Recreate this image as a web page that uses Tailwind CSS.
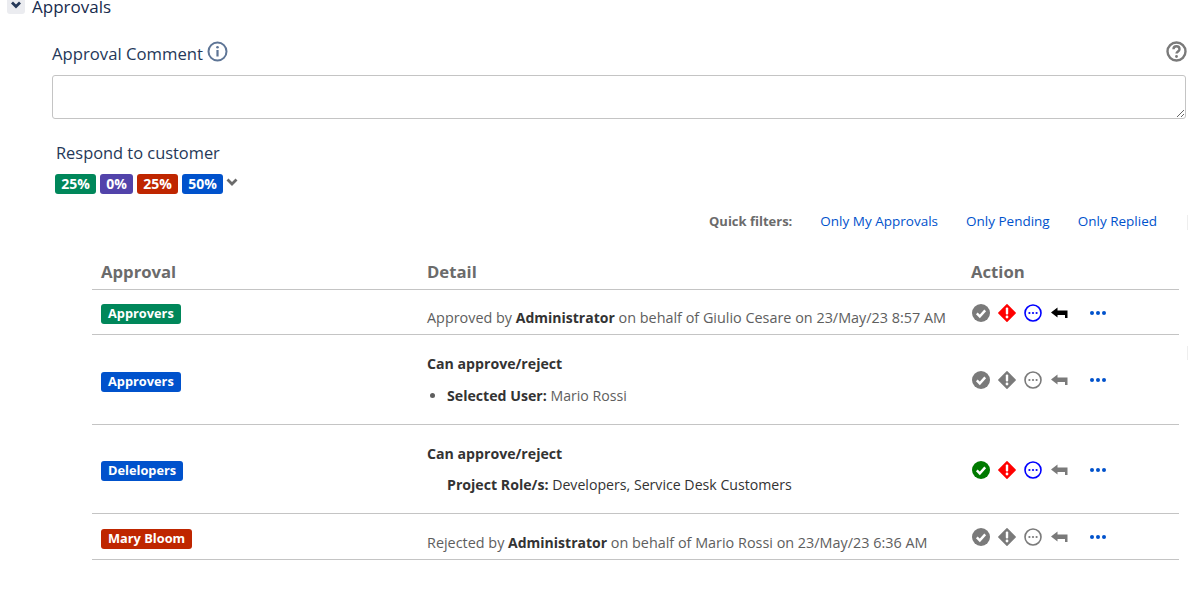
<!DOCTYPE html>
<html lang="en">
<head>
<meta charset="UTF-8">
<title>Approvals</title>
<script src="https://cdn.jsdelivr.net/npm/@tailwindcss/browser@4"></script>
</head>
<body class="relative bg-white h-[592px] overflow-hidden font-['Open_Sans',sans-serif] text-[14px] text-[#42526e]">
<svg class="hidden">
  <symbol id="check" viewBox="0 0 18 18"><circle cx="9" cy="9" r="9" fill="currentColor"/><path d="M4.8 9.4l3 3 5.4-6" fill="none" stroke="#fff" stroke-width="2.4"/></symbol>
  <symbol id="warn" viewBox="0 0 18 18"><path d="M9 0.8l8.2 8.2-8.2 8.2-8.2-8.2z" fill="currentColor" stroke="currentColor" stroke-width="1.4" stroke-linejoin="round"/><rect x="7.8" y="3.600" width="2.4" height="7" rx="1" fill="#fff"/><circle cx="9" cy="13" r="1.400" fill="#fff"/></symbol>
  <symbol id="more" viewBox="0 0 18 18"><circle cx="9" cy="9" r="8" fill="none" stroke="currentColor" stroke-width="1.600"/><circle cx="5.400" cy="9" r="1.100" fill="currentColor"/><circle cx="9" cy="9" r="1.100" fill="currentColor"/><circle cx="12.600" cy="9" r="1.100" fill="currentColor"/></symbol>
  <symbol id="reply" viewBox="0 0 17 12"><path d="M0 5.500L6.500 0.500V3.500H16.500V11H14V8H6.500V10.500z" fill="currentColor"/></symbol>
  <symbol id="dots" viewBox="0 0 18 6"><circle cx="3" cy="3" r="2" fill="currentColor"/><circle cx="9" cy="3" r="2" fill="currentColor"/><circle cx="15" cy="3" r="2" fill="currentColor"/></symbol>
</svg>

<div class="-mt-[4px] ml-[7px] flex items-center gap-[7px] h-[20px]">
  <span class="w-[18px] h-[19px] rounded-[3px] bg-[#ebecf0] flex items-center justify-center -mt-[3px]">
    <svg class="w-[12px] h-[8px] text-[#253858]" viewBox="0 0 12 8"><path d="M2 1.500l4 4 4-4" fill="none" stroke="currentColor" stroke-width="2.800"/></svg>
  </span>
  <span class="text-[17px] text-[#172b4d] mt-[1px]">Approvals</span>
</div>

<div class="pl-[52px] pr-[2px] mt-[26px]">
  <div class="flex items-center justify-between h-[24px]">
    <div class="flex items-center gap-[4px]">
      <span class="text-[16.700px] text-[#253858]">Approval Comment</span>
      <svg class="w-[21px] h-[21px] -mt-[5px] text-[#5e7596]" viewBox="0 0 21 21"><circle cx="10.500" cy="10.500" r="9" fill="none" stroke="currentColor" stroke-width="2"/><rect x="9.400" y="9" width="2.200" height="6.500" fill="currentColor"/><circle cx="10.500" cy="6.300" r="1.300" fill="currentColor"/></svg>
    </div>
    <svg class="w-[21px] h-[21px] -mt-[6px] -mr-[1px] text-[#7a7a7a]" viewBox="0 0 21 21"><circle cx="10.500" cy="10.500" r="9" fill="none" stroke="currentColor" stroke-width="2.400"/><path d="M7.500 8.200c0-4 6-4 6 0 0 2.200-3 2.200-3 4.300" fill="none" stroke="currentColor" stroke-width="2.400"/><circle cx="10.500" cy="15.500" r="1.400" fill="currentColor"/></svg>
  </div>
  <textarea class="block w-full h-[44px] mt-[9px] border border-[#c4c4c4] rounded-[3px] bg-white"></textarea>
</div>

<div class="pl-[56px] mt-[22px] text-[16.400px] text-[#253858] leading-[24px]">Respond to customer</div>
<div class="pl-[55px] mt-[9px] flex items-start gap-[4px] text-[14px] font-bold text-white leading-[20px]">
  <span class="w-[41px] h-[20px] rounded-[3px] bg-[#00875a] text-center">25%</span>
  <span class="w-[33px] h-[20px] rounded-[3px] bg-[#5243aa] text-center">0%</span>
  <span class="w-[41px] h-[20px] rounded-[3px] bg-[#bf2600] text-center">25%</span>
  <span class="w-[41px] h-[20px] rounded-[3px] bg-[#0052cc] text-center">50%</span>
  <svg class="w-[12px] h-[8px] -ml-[1px] mt-[4px] text-[#6b6b6b]" viewBox="0 0 12 8"><path d="M1.500 1.500l4.500 4.500 4.500-4.500" fill="none" stroke="currentColor" stroke-width="2.800"/></svg>
</div>

<div class="mt-[15px] pr-[31px] flex justify-end items-center h-[24px] text-[13.500px]">
  <span class="font-bold text-[13px] text-[#6b6b6b] mr-[28px] mt-[1px]">Quick filters:</span>
  <a class="text-[#0052cc] mr-[28px]">Only My Approvals</a>
  <a class="text-[#0052cc] mr-[28px]">Only Pending</a>
  <a class="text-[#0052cc]">Only Replied</a>
</div>

<div class="ml-[92px] mr-[9px] mt-[19px]">
  <div class="grid grid-cols-[326px_543px_1fr] h-[38px] items-center border-b border-[#c4c4c4] text-[16.700px] font-bold text-[#6b6b6b]">
    <div class="pl-[9px] mt-[3px]">Approval</div>
    <div class="pl-[9px] mt-[3px]">Detail</div>
    <div class="pl-[10px] mt-[3px]">Action</div>
  </div>

  <div class="grid grid-cols-[326px_543px_1fr] h-[45px] border-b border-[#c4c4c4] items-center">
    <div class="pl-[9px] mt-[4px]"><span class="block w-fit px-[7px] h-[20px] leading-[19px] rounded-[3px] bg-[#00875a] text-white text-[12.800px] font-bold">Approvers</span></div>
    <div class="pl-[9px] mt-[11px] text-[14.400px] text-[#5e5e5e]">Approved by <b class="text-[14px] text-[#333]">Administrator</b> on behalf of Giulio Cesare on 23/May/23 8:57 AM</div>
    <div class="pl-[11px] mt-[2px] flex items-center">
      <svg class="w-[18px] h-[18px] text-[#7a7a7a]"><use href="#check"/></svg>
      <svg class="w-[18px] h-[18px] ml-[8px] text-[#ff0000]"><use href="#warn"/></svg>
      <svg class="w-[18px] h-[18px] ml-[8px] text-[#0000ff]"><use href="#more"/></svg>
      <svg class="w-[17px] h-[12px] ml-[9px] text-black"><use href="#reply"/></svg>
      <svg class="w-[18px] h-[6px] ml-[21px] text-[#0052cc]"><use href="#dots"/></svg>
    </div>
  </div>

  <div class="grid grid-cols-[326px_543px_1fr] h-[90px] border-b border-[#c4c4c4] items-center">
    <div class="pl-[9px] mt-[4px]"><span class="block w-fit px-[7px] h-[20px] leading-[19px] rounded-[3px] bg-[#0052cc] text-white text-[12.800px] font-bold">Approvers</span></div>
    <div class="pl-[9px] text-[14.150px] text-[#5e5e5e]">
      <div class="font-bold text-[#333] leading-[20px]">Can approve/reject</div>
      <ul class="list-disc pl-[20px] mt-[12px] leading-[20px]"><li><b class="text-[#333]">Selected User:</b> Mario Rossi</li></ul>
    </div>
    <div class="pl-[11px] flex items-center">
      <svg class="w-[18px] h-[18px] text-[#7a7a7a]"><use href="#check"/></svg>
      <svg class="w-[18px] h-[18px] ml-[8px] text-[#7a7a7a]"><use href="#warn"/></svg>
      <svg class="w-[18px] h-[18px] ml-[8px] text-[#7a7a7a]"><use href="#more"/></svg>
      <svg class="w-[17px] h-[12px] ml-[9px] text-[#7a7a7a]"><use href="#reply"/></svg>
      <svg class="w-[18px] h-[6px] ml-[21px] text-[#0052cc]"><use href="#dots"/></svg>
    </div>
  </div>

  <div class="grid grid-cols-[326px_543px_1fr] h-[89px] border-b border-[#c4c4c4] items-center">
    <div class="pl-[9px] mt-[4px]"><span class="block w-fit px-[7px] h-[20px] leading-[19px] rounded-[3px] bg-[#0052cc] text-white text-[12.800px] font-bold">Delelopers</span></div>
    <div class="pl-[9px] text-[14.150px] text-[#333]">
      <div class="font-bold leading-[20px]">Can approve/reject</div>
      <div class="pl-[20px] mt-[11px] leading-[20px]"><b>Project Role/s:</b> Developers, Service Desk Customers</div>
    </div>
    <div class="pl-[11px] mt-[2px] flex items-center">
      <svg class="w-[18px] h-[18px] text-[#007a00]"><use href="#check"/></svg>
      <svg class="w-[18px] h-[18px] ml-[8px] text-[#ff0000]"><use href="#warn"/></svg>
      <svg class="w-[18px] h-[18px] ml-[8px] text-[#0000ff]"><use href="#more"/></svg>
      <svg class="w-[17px] h-[12px] ml-[9px] text-[#7a7a7a]"><use href="#reply"/></svg>
      <svg class="w-[18px] h-[6px] ml-[21px] text-[#0052cc]"><use href="#dots"/></svg>
    </div>
  </div>

  <div class="grid grid-cols-[326px_543px_1fr] h-[46px] border-b border-[#c4c4c4] items-center">
    <div class="pl-[9px] mt-[4px]"><span class="block w-fit px-[7px] h-[20px] leading-[19px] rounded-[3px] bg-[#bf2600] text-white text-[12.800px] font-bold">Mary Bloom</span></div>
    <div class="pl-[9px] mt-[12px] text-[14.400px] text-[#5e5e5e]">Rejected by <b class="text-[14px] text-[#333]">Administrator</b> on behalf of Mario Rossi on 23/May/23 6:36 AM</div>
    <div class="pl-[11px] mt-[1px] flex items-center">
      <svg class="w-[18px] h-[18px] text-[#7a7a7a]"><use href="#check"/></svg>
      <svg class="w-[18px] h-[18px] ml-[8px] text-[#7a7a7a]"><use href="#warn"/></svg>
      <svg class="w-[18px] h-[18px] ml-[8px] text-[#7a7a7a]"><use href="#more"/></svg>
      <svg class="w-[17px] h-[12px] ml-[9px] text-[#7a7a7a]"><use href="#reply"/></svg>
      <svg class="w-[18px] h-[6px] ml-[21px] text-[#0052cc]"><use href="#dots"/></svg>
    </div>
  </div>
</div>

<!-- faint scroll edge marks at the right of the capture -->
<div class="absolute right-0 top-[215px] w-[1px] h-[15px] bg-[#eeeeee]"></div>
<div class="absolute right-0 top-[346px] w-[1px] h-[14px] bg-[#eeeeee]"></div>
</body>
</html>
